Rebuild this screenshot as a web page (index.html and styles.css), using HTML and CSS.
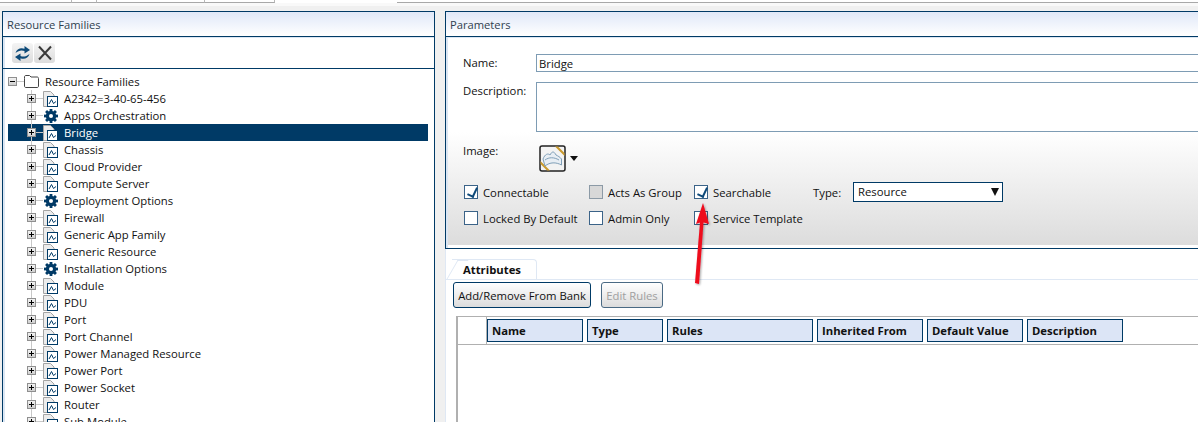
FILE: index.html
```html
<!DOCTYPE html>
<html lang="en">
<head>
  <meta charset="UTF-8">
  <title>Resource Families</title>
  <link rel="stylesheet" href="styles.css">
</head>
<body>
  <svg class="defs" width="0" height="0">
    <symbol id="i-family" viewBox="0 0 16 16">
      <path d="M.5 .5H7.500L11 4V15.500H.5Z" fill="#ececec" stroke="#a4a4a4"/>
      <rect x="4.500" y="5.500" width="10" height="10" fill="#fff" stroke="#003a66"/>
      <path d="M6 13L8.500 8.500L10.500 12.500L13 10.500" fill="none" stroke="#003a66"/>
    </symbol>
    <symbol id="i-gear" viewBox="0 0 16 16">
      <circle cx="8" cy="8" r="5.200" fill="#003a66"/>
      <g fill="#003a66">
        <rect x="6.600" y="1" width="2.800" height="14"/>
        <rect x="6.600" y="1" width="2.800" height="14" transform="rotate(45 8 8)"/>
        <rect x="6.600" y="1" width="2.800" height="14" transform="rotate(90 8 8)"/>
        <rect x="6.600" y="1" width="2.800" height="14" transform="rotate(135 8 8)"/>
      </g>
      <circle cx="8" cy="8" r="2" fill="#fff"/>
    </symbol>
  </svg>

  <div class="topstrip">
    <div class="toptab first"></div>
    <div class="toptab t2"></div>
    <div class="toptab t3"></div>
    <div class="toptab t4"></div>
    <div class="toptab active"></div>
    <div class="toptab rest"></div>
  </div>

  <div class="main">
    <div class="panel left">
      <div class="panel-title">Resource Families</div>
      <div class="toolbar">
        <button class="tool">
          <svg width="17" height="17" viewBox="0 0 17 17"><path d="M1.500 8C2.500 4 7 2 10.500 3.800V1L16 5L10.500 8.500V6C7.500 4.800 4.500 5.500 1.500 8Z" fill="#0d4a78"/><path d="M15.500 9C14.500 13 10 15 6.500 13.200V16L1 12L6.500 8.500V11C9.500 12.200 12.500 11.500 15.500 9Z" fill="#0d4a78"/></svg>
        </button>
        <button class="tool">
          <svg width="16" height="16" viewBox="0 0 16 16"><path d="M2 1.500L14 14.500M14 1.500L2 14.500" stroke="#3a3a3a" stroke-width="2" fill="none"/></svg>
        </button>
      </div>
      <div class="tree" id="tree"></div>
    </div>

    <div class="right">
      <div class="params">
        <div class="panel-title">Parameters</div>
        <div class="form-top">
          <div class="field name-field">
            <label class="lbl">Name:</label>
            <div class="input">Bridge</div>
          </div>
          <div class="field">
            <label class="lbl">Description:</label>
            <div class="input area"></div>
          </div>
        </div>
        <div class="form-bottom">
          <div class="image-row">
            <label class="lbl">Image:</label>
            <div class="img-pick">
              <svg width="27" height="27" viewBox="0 0 27 27">
                <rect x="1" y="1" width="25" height="25" rx="2" fill="#f3f3f3" stroke="#222" stroke-width="1.500"/>
                <path d="M16 1.500H19L25.500 8V11ZM1.500 16L11 25.500H8L1.500 19Z" fill="#c99a2e"/>
                <path d="M4 14C6 9 9 8 11 10C13 6 15 6 17 10C19 11 21 12 22.500 14V20C17 17 11 17 6 21Z" fill="#e8eef4" stroke="#7f9fb8"/>
                <path d="M6 15C10 12 15 12 20 15" fill="none" stroke="#7f9fb8"/>
              </svg>
              <span class="caret"></span>
            </div>
          </div>
          <div class="checks">
            <div class="check-col col1">
              <div class="chk"><span class="box on"></span>Connectable</div>
              <div class="chk"><span class="box"></span>Locked By Default</div>
            </div>
            <div class="check-col col2">
              <div class="chk"><span class="box grey"></span>Acts As Group</div>
              <div class="chk"><span class="box"></span>Admin Only</div>
            </div>
            <div class="check-col col3">
              <div class="chk"><span class="box on"></span>Searchable</div>
              <div class="chk"><span class="box"></span>Service Template</div>
            </div>
            <div class="type-row">
              <span class="type-lbl">Type:</span>
              <div class="select">Resource<span class="sel-caret"></span></div>
            </div>
          </div>
        </div>
      </div>

      <div class="lower">
        <div class="tabs">
          <div class="tab">Attributes</div>
        </div>
        <div class="tab-body">
          <div class="btn-row">
            <button class="btn add">Add/Remove From Bank</button>
            <button class="btn off">Edit Rules</button>
          </div>
          <div class="grid">
            <div class="grid-head">
              <div class="corner"></div>
              <div class="col c-name">Name</div>
              <div class="col c-type">Type</div>
              <div class="col c-rules">Rules</div>
              <div class="col c-inh">Inherited From</div>
              <div class="col c-def">Default Value</div>
              <div class="col c-desc">Description</div>
            </div>
          </div>
        </div>
      </div>
    </div>
  </div>

  <!-- annotation drawn on top of the screenshot -->
  <svg class="arrow" width="40" height="90" viewBox="0 0 40 90">
    <defs>
      <filter id="sh" x="-30%" y="-30%" width="160%" height="160%">
        <feDropShadow dx="1" dy="1" stdDeviation="1" flood-color="#000" flood-opacity=".35"/>
      </filter>
    </defs>
    <path d="M22 2L28 23L22.500 21.500L18 83L14 82L19 21.500L15 23Z" fill="#ee0a1e" filter="url(#sh)"/>
  </svg>

  <script src="tree.js"></script>
</body>
</html>
```

FILE: tree.js
```js
const items = [
  ["A2342=3-40-65-456", "family"],
  ["Apps Orchestration", "gear"],
  ["Bridge", "family", true],
  ["Chassis", "family"],
  ["Cloud Provider", "family"],
  ["Compute Server", "family"],
  ["Deployment Options", "gear"],
  ["Firewall", "family"],
  ["Generic App Family", "family"],
  ["Generic Resource", "family"],
  ["Installation Options", "gear"],
  ["Module", "family"],
  ["PDU", "family"],
  ["Port", "family"],
  ["Port Channel", "family"],
  ["Power Managed Resource", "family"],
  ["Power Port", "family"],
  ["Power Socket", "family"],
  ["Router", "family"],
  ["Sub Module", "family"]
];

const tree = document.getElementById("tree");

tree.innerHTML = `
  <div class="node root">
    <span class="exp minus"></span>
    <svg class="folder" width="15" height="13" viewBox="0 0 15 13"><path d="M.5 3.500V11C.5 12 1 12.500 2 12.500H13C14 12.500 14.500 12 14.500 11V3.500C14.500 2.500 14 2 13 2H7L5.500 .5H2C1 .5 .5 1 .5 2Z" fill="#fff" stroke="#444"/></svg>
    <span class="node-text">Resource Families</span>
  </div>`;

items.forEach(([name, icon, selected]) => {
  const row = document.createElement("div");
  row.className = `node child ${selected ? "selected" : ""}`;
  row.innerHTML = `<span class="exp"></span><svg class="ico" width="16" height="16"><use href="#i-${icon}"/></svg><span class="node-text">${name}</span>`;
  tree.appendChild(row);
});
```

FILE: styles.css
```css
* {
  box-sizing: border-box;
}

body {
  margin: 0;
  width: 1198px;
  height: 422px;
  overflow: hidden;
  position: relative;
  background: #f0f0f0;
  font-family: "Open Sans", "Noto Sans", sans-serif;
  font-size: 11.3px;
  color: #111;
}

.defs {
  display: block;
  height: 0;
}

.topstrip {
  display: flex;
  height: 3px;
  background: #fff;
  box-shadow: 0 3px 0 #f9f9f9;
}

.toptab {
  border-bottom: 1px solid #a8a8a8;
  border-right: 1px solid #b8b8b8;
}

.toptab.first {
  width: 72px;
}

.toptab.t2 {
  width: 25px;
}

.toptab.t3 {
  width: 108px;
}

.toptab.t4 {
  width: 70px;
}

.toptab.active {
  width: 122px;
  border-bottom: none;
  border-right: none;
}

.toptab.rest {
  flex: 1;
  border-right: none;
}

.main {
  display: flex;
  align-items: stretch;
  gap: 10px;
  padding: 8px 0 0 2px;
  height: 419px;
}

.panel.left {
  width: 433px;
  flex: none;
  overflow: hidden;
  background: #fff;
  border: 1px solid #003a66;
  border-bottom: none;
  box-shadow: inset 2px 0 0 #dbe6f3;
}

.panel-title {
  height: 25px;
  line-height: 26px;
  padding-left: 4px;
  font-size: 11.2px;
  color: #2f3f4f;
  background: linear-gradient(#e0e8f8, #fff);
  border-bottom: 1px solid #003a66;
  box-shadow: 0 1px 0 #dbe6f3;
}

.toolbar {
  display: flex;
  gap: 1px;
  height: 32px;
  padding: 6px 0 0 9px;
  border-bottom: 1px solid #003a66;
}

.tool {
  width: 21px;
  height: 20px;
  padding: 0;
  display: flex;
  align-items: center;
  justify-content: center;
  border: none;
  border-radius: 3px;
  background: linear-gradient(#f4f4f4, #dcdcdc);
}

.tree {
  padding: 4px 6px 0 5px;
}

.node {
  display: flex;
  align-items: center;
  height: 17px;
  position: relative;
}

.node.child {
  padding-left: 19px;
}

/* tree connector lines */
.node.child::before {
  content: "";
  position: absolute;
  left: 23px;
  top: 0;
  bottom: 0;
  border-left: 1px solid #c8c8c8;
}

.node::after {
  content: "";
  position: absolute;
  left: 27px;
  width: 8px;
  top: 8px;
  border-top: 1px solid #c8c8c8;
}

.node.root::after {
  left: 9px;
  width: 7px;
}

.node.selected {
  background: #003a66;
  color: #fff;
}

.exp {
  width: 9px;
  height: 9px;
  flex: none;
  border: 1px solid #8f8f8f;
  background: linear-gradient(#f2f2f2, #cfcfcf);
  position: relative;
  z-index: 1;
}

.exp::before {
  content: "";
  position: absolute;
  left: 1px;
  top: 3px;
  width: 5px;
  height: 1px;
  background: #000;
}

.exp::after {
  content: "";
  position: absolute;
  left: 3px;
  top: 1px;
  width: 1px;
  height: 5px;
  background: #000;
}

.exp.minus::after {
  display: none;
}

.folder {
  margin-left: 7px;
  flex: none;
  position: relative;
  z-index: 1;
}

.ico {
  margin-left: 7px;
  flex: none;
  position: relative;
  z-index: 1;
}

.node-text {
  margin-left: 5px;
  padding-bottom: 1px;
  white-space: nowrap;
}

.root .node-text {
  margin-left: 6px;
}

.right {
  flex: 1;
  min-width: 0;
}

.params {
  background: #fff;
  border-top: 1px solid #003a66;
  border-left: 1px solid #003a66;
  border-bottom: 1px solid #003a66;
  box-shadow: inset 2px 0 0 #dbe6f3;
}

.form-top {
  padding: 17px 0 0 17px;
  height: 95px;
}

.field {
  display: flex;
}

.name-field {
  margin-bottom: 10px;
}

.lbl {
  width: 73px;
  flex: none;
  line-height: 18px;
}

.input {
  flex: 1;
  height: 18px;
  line-height: 17px;
  padding-left: 2px;
  border: 1px solid #7e9cb4;
  border-right: none;
}

.input.area {
  height: 50px;
}

.form-bottom {
  height: 116px;
  margin-left: 2px;
  padding: 13px 0 0 15px;
  background: linear-gradient(#fff, #dcdcdc);
  border-bottom: 3px solid #fff;
}

.image-row {
  display: flex;
  height: 40px;
}

.image-row .lbl {
  width: 76px;
  margin-top: -3px;
}

.img-pick {
  display: flex;
  align-items: center;
  height: 27px;
  gap: 4px;
}

.caret {
  width: 0;
  height: 0;
  border-left: 4px solid transparent;
  border-right: 4px solid transparent;
  border-top: 5px solid #111;
}

.checks {
  display: flex;
  padding-left: 1px;
}

.check-col {
  display: flex;
  flex-direction: column;
  gap: 12px;
}

.col1 {
  width: 125px;
}

.col2 {
  width: 105px;
}

.col3 {
  width: 119px;
}

.chk {
  display: flex;
  align-items: center;
  height: 14px;
  gap: 5px;
  white-space: nowrap;
}

.box {
  width: 14px;
  height: 14px;
  flex: none;
  background: #fff;
  border: 1px solid #3b6388;
  position: relative;
}

.box.grey {
  background: #d8d8d8;
  border-color: #8c9aa6;
}

.box.on::after {
  content: "";
  position: absolute;
  left: 4px;
  top: 0;
  width: 5px;
  height: 9px;
  border: solid #0f4a7a;
  border-width: 0 2px 2px 0;
  transform: rotate(25deg);
}

.type-row {
  display: flex;
  align-items: center;
  height: 20px;
  margin-top: -3px;
}

.type-lbl {
  width: 40px;
}

.select {
  width: 150px;
  height: 20px;
  line-height: 18px;
  padding-left: 4px;
  background: #fff;
  border: 1px solid #003a66;
  position: relative;
}

.sel-caret {
  position: absolute;
  right: 3px;
  top: 5px;
  width: 0;
  height: 0;
  border-left: 4px solid transparent;
  border-right: 4px solid transparent;
  border-top: 8px solid #111;
}

.lower {
  background: #fff;
  height: 175px;
  border-left: 1px solid #dfe8f4;
}

.tabs {
  height: 30px;
  padding: 10px 0 0 6px;
}

.tab {
  width: 85px;
  height: 20px;
  padding-left: 11px;
  line-height: 20px;
  font-weight: 700;
  border: 1px solid #dfe8f4;
  border-bottom: none;
  border-left: none;
  border-radius: 0 4px 0 0;
  position: relative;
}

/* slanted left edge of the tab */
.tab::before {
  content: "";
  position: absolute;
  left: -6px;
  top: 0;
  width: 10px;
  height: 19px;
  border-left: 1px solid #dfe8f4;
  border-top: 1px solid #dfe8f4;
  transform: skewX(-30deg);
  transform-origin: bottom left;
}

.tab-body {
  border-top: 1px solid #dfe8f4;
  padding: 2px 0 0 7px;
}

.btn-row {
  display: flex;
  gap: 10px;
}

.btn {
  height: 26px;
  padding: 0;
  white-space: nowrap;
  font: 11.3px "Open Sans", "Noto Sans", sans-serif;
  color: #111;
  background: linear-gradient(#fff, #dcdcdc);
  border: 1px solid #003a66;
  border-radius: 3px;
}

.btn.add {
  width: 138px;
}

.btn.off {
  width: 62px;
  color: #a0a0a0;
  border-color: #4a6a84;
}

.grid {
  margin: 8px 0 0 3px;
  height: 120px;
  border-left: 2px solid #b0b0b0;
  border-top: 1px solid #b0b0b0;
}

.grid-head {
  display: flex;
  align-items: center;
  gap: 4px;
  height: 28px;
  border-bottom: 1px solid #b0b0b0;
}

.corner {
  width: 29px;
  height: 27px;
  margin-right: -4px;
  border-right: 1px solid #b0b0b0;
}

.col {
  height: 23px;
  line-height: 22px;
  padding-left: 4px;
  font-weight: 700;
  background: #dce5f6;
  border: 1px solid #003a66;
}

.c-name, .c-def, .c-desc {
  width: 96px;
}

.c-type {
  width: 76px;
}

.c-rules {
  width: 146px;
}

.c-inh {
  width: 106px;
}

.arrow {
  position: absolute;
  left: 681px;
  top: 201px;
}
```
